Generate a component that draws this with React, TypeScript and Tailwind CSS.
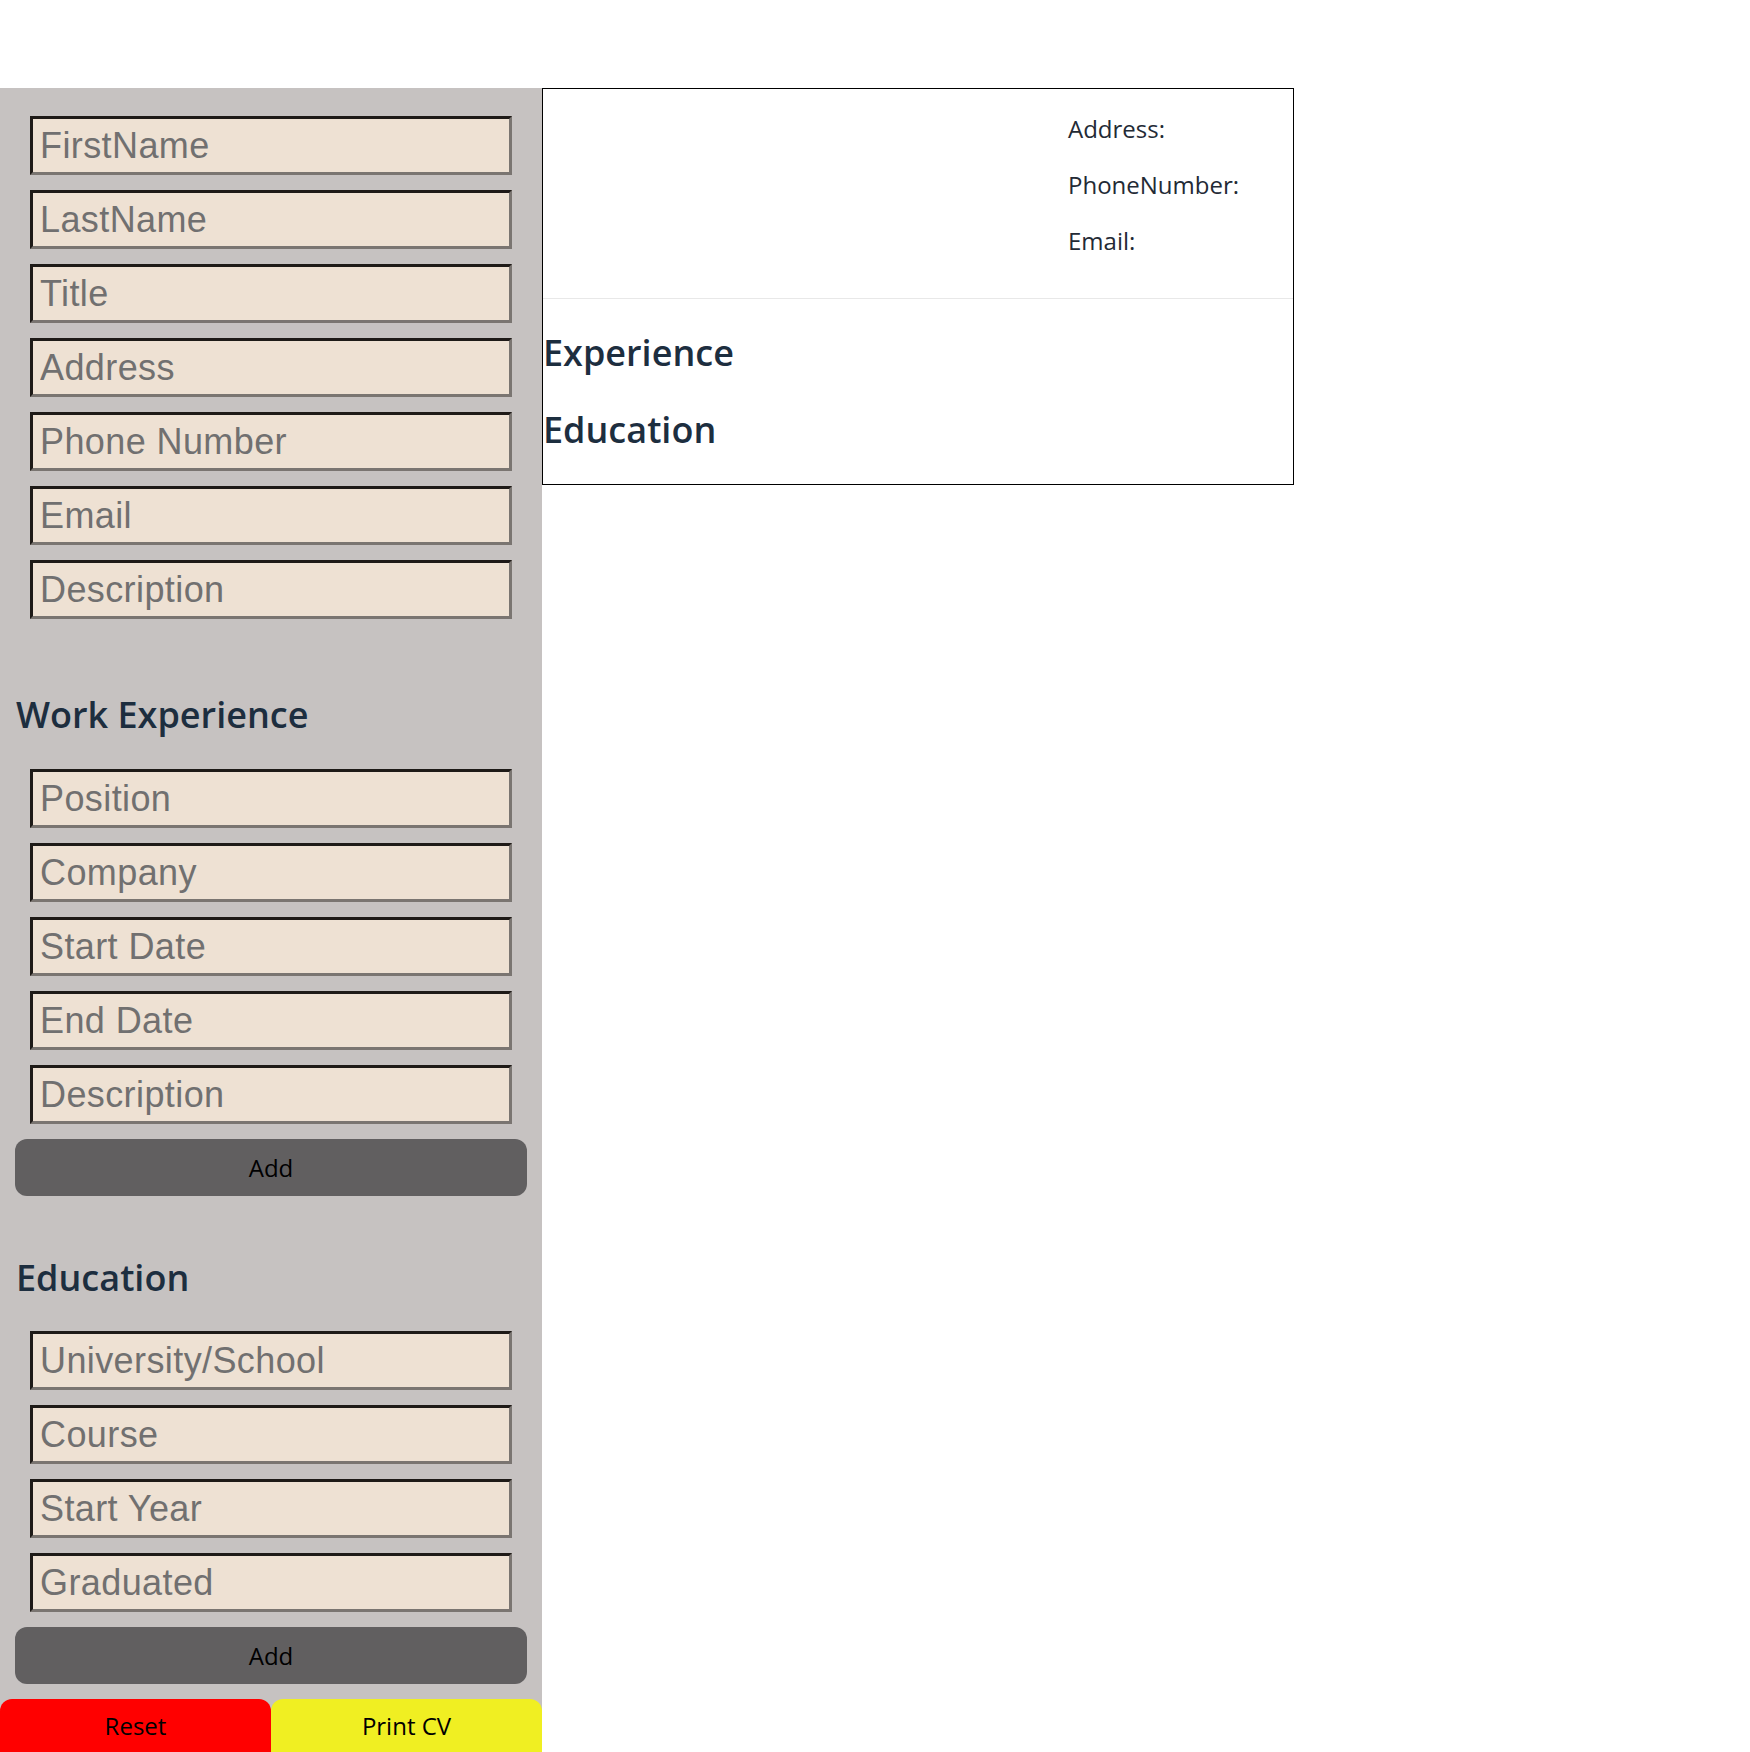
const personal = ["FirstName", "LastName", "Title", "Address", "Phone Number", "Email", "Description"];
const work = ["Position", "Company", "Start Date", "End Date", "Description"];
const education = ["University/School", "Course", "Start Year", "Graduated"];

const Field = ({ placeholder }: { placeholder: string }) => (
  <input
    type="text"
    placeholder={placeholder}
    className="h-[59px] w-full border-[3px] border-t-[#1e1a17] border-l-[#1e1a17] border-b-[#7a7571] border-r-[#7a7571] bg-[#eee1d3] pl-[7px] font-['Liberation_Sans',Arial,sans-serif] text-[36px] tracking-[0.4px] text-[#333] outline-none placeholder:text-[#717070]"
  />
);

const SectionTitle = ({ children, className }: { children: string; className: string }) => (
  <h2 className={`px-[16px] text-[36px] leading-[49px] font-semibold text-[#1d2e3f] ${className}`}>{children}</h2>
);

const AddButton = () => (
  <button className="mx-[15px] mt-[15px] h-[57px] rounded-[12px] bg-[#615f60] text-[24px] text-black">Add</button>
);

const App = () => {
  return (
    <div className="flex h-[1752px] items-start overflow-hidden bg-white pt-[88px] font-['Open_Sans',sans-serif]">
      <aside className="flex w-[542px] shrink-0 flex-col bg-[#c6c2c1] pt-[28px]">
        <div className="flex flex-col gap-[15px] px-[30px]">
          {personal.map((p) => (
            <Field key={p} placeholder={p} />
          ))}
        </div>

        <SectionTitle className="mt-[71px] mb-[30px]">Work Experience</SectionTitle>
        <div className="flex flex-col gap-[15px] px-[30px]">
          {work.map((p) => (
            <Field key={p} placeholder={p} />
          ))}
        </div>
        <AddButton />

        <SectionTitle className="mt-[57px] mb-[29px]">Education</SectionTitle>
        <div className="flex flex-col gap-[15px] px-[30px]">
          {education.map((p) => (
            <Field key={p} placeholder={p} />
          ))}
        </div>
        <AddButton />

        <div className="mt-[15px] grid h-[53px] grid-cols-2">
          <button className="rounded-t-[12px] bg-[#ff0000] text-[24px] text-black">Reset</button>
          <button className="rounded-t-[12px] bg-[#f0ef22] text-[24px] text-black">Print CV</button>
        </div>
      </aside>

      <section className="flex h-[397px] w-[752px] shrink-0 flex-col border border-black">
        <div className="flex h-[210px] border-b border-[#e8e8e8]">
          <div className="ml-auto flex w-[225px] flex-col gap-[24px] pt-[24px] text-[24px] leading-[32px] text-[#232a35]">
            <p>Address:</p>
            <p>PhoneNumber:</p>
            <p>Email:</p>
          </div>
        </div>
        <div className="flex flex-col gap-[28px] pt-[29px] text-[36px] leading-[49px] font-semibold text-[#1d2e3f]">
          <h2>Experience</h2>
          <h2>Education</h2>
        </div>
      </section>
    </div>
  );
};

export default App;
